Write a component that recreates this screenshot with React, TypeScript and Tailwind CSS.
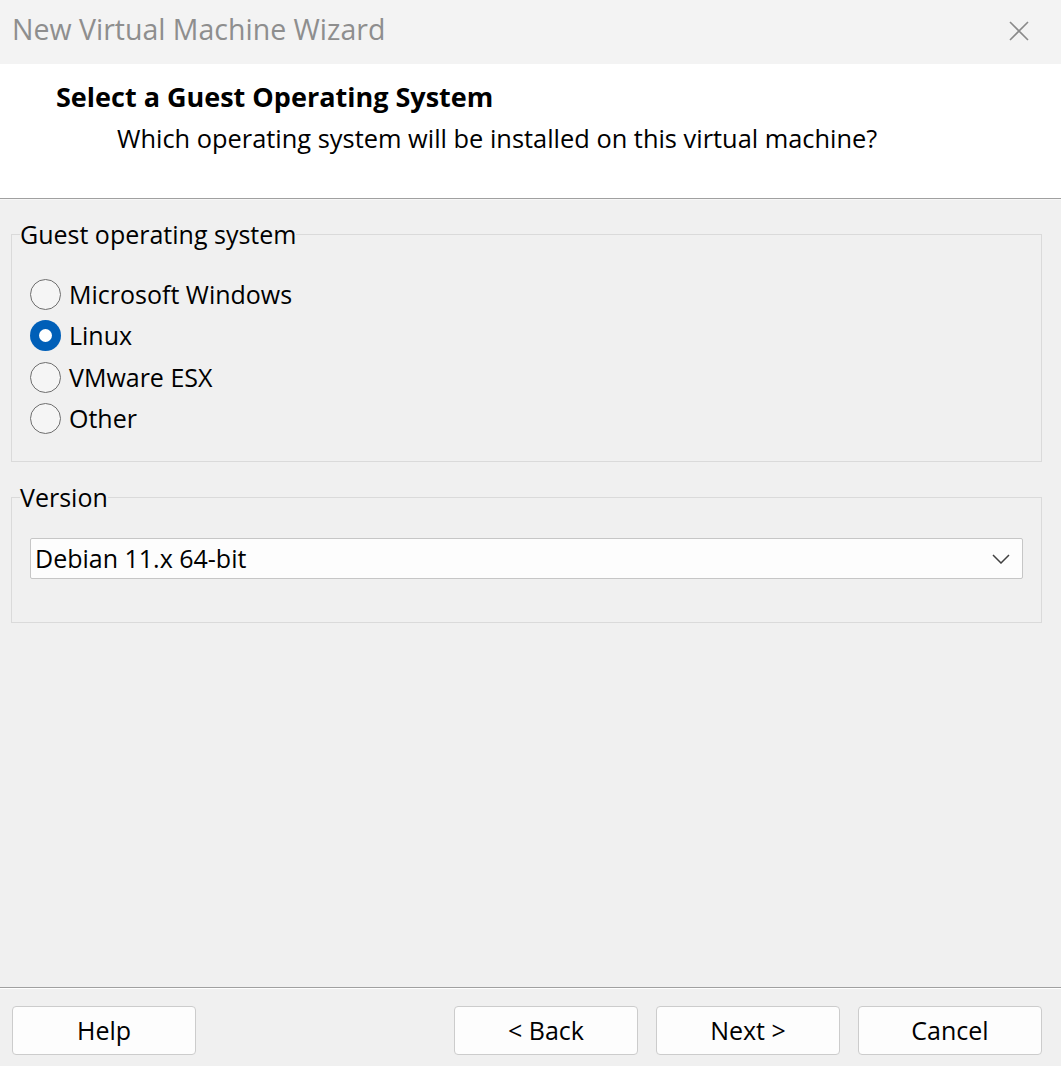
import React from "react";

const font = { fontFamily: '"Open Sans", "Noto Sans", sans-serif' };

function Radio({ label, checked }: { label: string; checked?: boolean }) {
  return (
    <div className="flex items-center h-[41.3px]">
      {checked ? (
        <span className="w-[31px] h-[31px] rounded-full bg-[#005fb8] flex items-center justify-center shrink-0">
          <span className="w-[13px] h-[13px] rounded-full bg-white" />
        </span>
      ) : (
        <span className="w-[31px] h-[31px] rounded-full border border-[#6e6e6e] bg-[#f5f5f5] shrink-0" />
      )}
      <span className="ml-[8px] text-[25px] text-black leading-none">{label}</span>
    </div>
  );
}

function Btn({ children }: { children: React.ReactNode }) {
  return (
    <button className="w-[184px] h-[49px] rounded-[4px] border border-[#cccccc] bg-[#fdfdfd] text-[25px] text-black leading-none flex items-center justify-center">
      {children}
    </button>
  );
}

export default function App() {
  return (
    <div className="w-[1061px] h-[1066px] flex flex-col bg-[#f0f0f0] overflow-hidden" style={font}>
      {/* Title bar */}
      <div className="h-[64px] bg-[#f3f3f3] flex items-center justify-between pl-[12px] pr-[32px] shrink-0 pb-[6px]">
        <span className="text-[28.5px] text-[#8e8e8e] leading-none">New Virtual Machine Wizard</span>
        <svg width="20" height="20" viewBox="0 0 20 20" className="mt-[4px]">
          <path d="M1 1 L19 19 M19 1 L1 19" stroke="#8a8a8a" strokeWidth="1.6" />
        </svg>
      </div>

      {/* Header */}
      <div className="h-[135px] bg-white border-b border-[#a0a0a0] shrink-0 pt-[18px]">
        <div className="pl-[56px] text-[27px] font-bold text-black leading-[30px]">Select a Guest Operating System</div>
        <div className="pl-[117px] mt-[11px] text-[25.4px] text-black leading-[30px]">
          Which operating system will be installed on this virtual machine?
        </div>
      </div>
      <div className="h-px bg-[#f7f7f7] shrink-0" />

      {/* Body */}
      <div className="flex-1 pl-[11px] pr-[19px] pt-[17px]">
        <fieldset className="border border-[#dadada] px-[8px] pb-[22px]">
          <legend className="text-[25px] leading-[34px] text-black px-0">Guest operating system</legend>
          <div className="pl-[10px] pt-[23px]">
            <Radio label="Microsoft Windows" />
            <Radio label="Linux" checked />
            <Radio label="VMware ESX" />
            <Radio label="Other" />
          </div>
        </fieldset>

        <fieldset className="mt-[18px] border border-[#dadada] px-[8px] pb-[43px]">
          <legend className="text-[25px] leading-[34px] text-black px-0">Version</legend>
          <div className="pl-[10px] pr-[10px] pt-[24px]">
            <div className="h-[41px] bg-[#fdfdfd] border border-[#c6c6c6] rounded-[2px] flex items-center justify-between pl-[4px] pr-[12px]">
              <span className="text-[25px] leading-none text-black">Debian 11.x 64-bit</span>
              <svg width="18" height="10" viewBox="0 0 18 10">
                <path d="M1 1 L9 9 L17 1" fill="none" stroke="#404040" strokeWidth="1.5" />
              </svg>
            </div>
          </div>
        </fieldset>
      </div>

      {/* Footer */}
      <div className="h-px bg-[#a0a0a0] shrink-0" />
      <div className="h-px bg-white shrink-0" />
      <div className="h-[77px] shrink-0 flex items-start pt-[17px] pl-[12px] pr-[19px]">
        <Btn>Help</Btn>
        <div className="flex-1" />
        <div className="flex gap-[18px]">
          <Btn>&lt; Back</Btn>
          <Btn>Next &gt;</Btn>
          <Btn>Cancel</Btn>
        </div>
      </div>
    </div>
  );
}
